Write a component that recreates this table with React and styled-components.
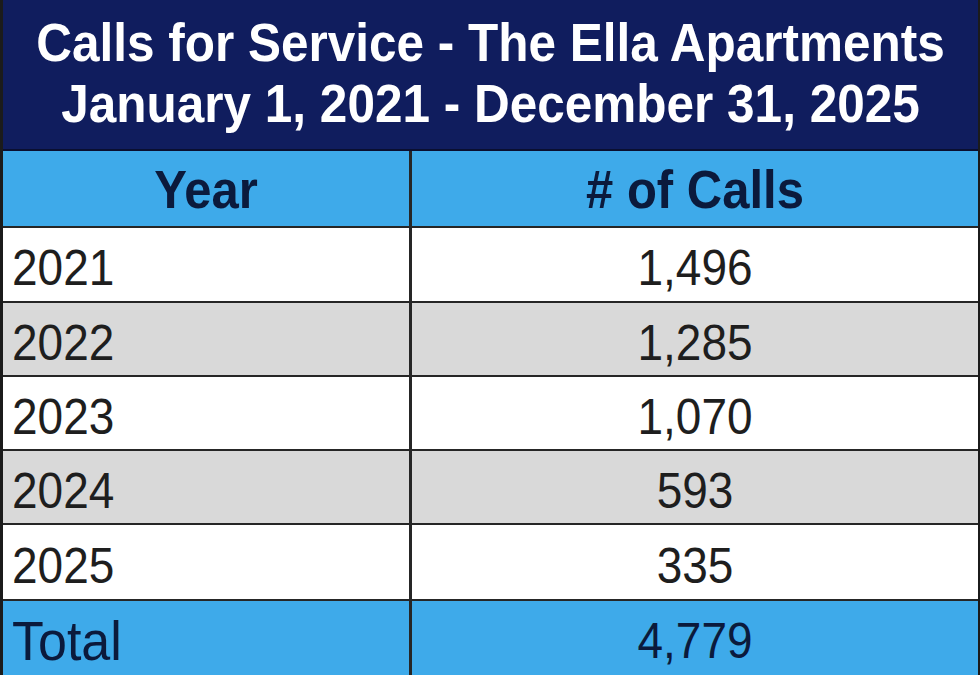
import React from "react";
import styled, { createGlobalStyle } from "styled-components";

const Global = createGlobalStyle`
  html, body { margin: 0; padding: 0; background: #ffffff; }
  body { font-family: "Liberation Sans", Arial, sans-serif; }
`;

const Sheet = styled.div`
  width: 975px;
  height: 675px;
  overflow: hidden;
  border-left: 3px solid #1b1b1b;
  border-right: 2px solid #1b1b1b;
  display: flex;
  flex-direction: column;
  background: #ffffff;
`;

const Title = styled.div`
  height: 151px;
  flex: none;
  background: #101d5e;
  border-bottom: 2px solid #0a0f30;
  color: #ffffff;
  font-weight: 700;
  font-size: 49.5px;
  line-height: 61px;
  text-align: center;
  display: flex;
  flex-direction: column;
  justify-content: center;
  align-items: center;
  padding-bottom: 4px;
  box-sizing: border-box;
`;

const Text = styled.span`
  display: inline-block;
  transform: scaleY(1.08);
  font-size: ${(p) => (p.$size ? `${p.$size}px` : "inherit")};
`;

const Row = styled.div`
  flex: none;
  display: grid;
  grid-template-columns: 409px 1fr;
  height: ${(p) => p.$h}px;
  box-sizing: border-box;
  border-bottom: 2px solid #262626;
  background: ${(p) =>
    p.$kind === "head" || p.$kind === "total"
      ? "#3eaaea"
      : p.$kind === "alt"
      ? "#d9d9d9"
      : "#ffffff"};
  color: ${(p) =>
    p.$kind === "head" || p.$kind === "total" ? "#0b1a3c" : "#1e1e1e"};
  font-size: ${(p) => (p.$kind === "head" ? 49 : 46)}px;
  font-weight: ${(p) => (p.$kind === "head" ? 700 : 400)};
  --shift: ${(p) => (p.$kind === "head" || p.$kind === "total" ? 2 : 7)}px;
`;

const Cell = styled.div`
  display: flex;
  align-items: center;
  justify-content: ${(p) => (p.$center ? "center" : "flex-start")};
  padding-left: ${(p) => (p.$center ? 0 : 9)}px;
  padding-top: var(--shift);
  box-sizing: border-box;
  border-right: ${(p) => (p.$first ? "3px solid #262626" : "none")};
  white-space: nowrap;
`;

const rows = [
  { year: "2021", calls: "1,496", kind: "plain", h: 75 },
  { year: "2022", calls: "1,285", kind: "alt", h: 74 },
  { year: "2023", calls: "1,070", kind: "plain", h: 74 },
  { year: "2024", calls: "593", kind: "alt", h: 74 },
  { year: "2025", calls: "335", kind: "plain", h: 76 },
];

export default function App() {
  return (
    <>
      <Global />
      <Sheet>
        <Title>
          <Text>Calls for Service - The Ella Apartments</Text>
          <Text>January 1, 2021 - December 31, 2025</Text>
        </Title>
        <Row $kind="head" $h={77}>
          <Cell $first $center>
            <Text>Year</Text>
          </Cell>
          <Cell $center>
            <Text># of Calls</Text>
          </Cell>
        </Row>
        {rows.map((r) => (
          <Row key={r.year} $kind={r.kind} $h={r.h}>
            <Cell $first>
              <Text>{r.year}</Text>
            </Cell>
            <Cell $center>
              <Text>{r.calls}</Text>
            </Cell>
          </Row>
        ))}
        <Row $kind="total" $h={80}>
          <Cell $first>
            <Text $size={52}>Total</Text>
          </Cell>
          <Cell $center>
            <Text>4,779</Text>
          </Cell>
        </Row>
      </Sheet>
    </>
  );
}
